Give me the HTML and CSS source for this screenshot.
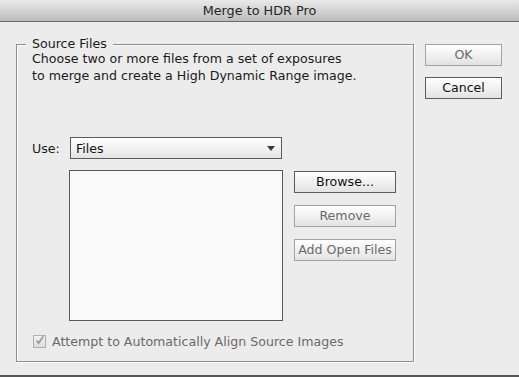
FILE: index.html
```html
<!DOCTYPE html>
<html>
<head>
<meta charset="utf-8">
<link rel="stylesheet" href="styles.css">
</head>
<body>
<div class="window">
  <div class="titlebar">Merge to HDR Pro</div>
  <div class="main">
    <div class="group">
      <div class="legend">Source Files</div>
      <div class="desc">Choose two or more files from a set of exposures<br>to merge and create a High Dynamic Range image.</div>
      <div class="use-row">
        <span class="use-label">Use:</span>
        <div class="select"><span>Files</span><span class="arrow"></span></div>
      </div>
      <div class="list-row">
        <div class="listbox"></div>
        <div class="side-buttons">
          <div class="btn dark">Browse...</div>
          <div class="btn dim">Remove</div>
          <div class="btn dim">Add Open Files</div>
        </div>
      </div>
      <div class="check-row">
        <span class="checkbox"><svg width="13" height="13" viewBox="0 0 13 13"><path d="M3 6.5 L5.5 9.5 L11 1.5" fill="none" stroke="#9a9a9a" stroke-width="2"/></svg></span>
        <span class="check-label">Attempt to Automatically Align Source Images</span>
      </div>
    </div>
    <div class="dialog-buttons">
      <div class="btn dim ok">OK</div>
      <div class="btn dark">Cancel</div>
    </div>
  </div>
</div>
</body>
</html>
```
FILE: styles.css
```css
html, body {
  margin: 0;
  padding: 0;
}
body {
  background: #ececec;
  font-family: "DejaVu Sans", sans-serif;
  font-size: 12.6px;
  color: #1a1a1a;
}
.window {
  width: 519px;
  height: 377px;
  box-sizing: border-box;
  border-bottom: 2px solid #575757;
  display: flex;
  flex-direction: column;
}
.titlebar {
  height: 21px;
  line-height: 22px;
  border-bottom: 1px solid #6a6a6a;
  background: linear-gradient(#e9e9e9, #bdbdbd);
  text-align: center;
  font-size: 12.8px;
  color: #262626;
}
.main {
  display: flex;
  align-items: flex-start;
  padding: 22px 0 0 16px;
  gap: 11px;
}
.group {
  width: 398px;
  height: 318px;
  box-sizing: border-box;
  border: 1px solid #8e8e8e;
  box-shadow: 1px 1px 0 #fbfbfb, inset 1px 1px 0 #fbfbfb;
  padding: 0 0 0 15px;
  display: flex;
  flex-direction: column;
}
.legend {
  align-self: flex-start;
  margin: -8px 0 0 -6px;
  padding: 0 6px;
  background: #ececec;
  line-height: 14px;
}
.desc {
  margin-top: -1px;
  line-height: 17px;
}
.use-row {
  display: flex;
  align-items: center;
  margin-top: 53px;
}
.use-label {
  width: 38px;
}
.select {
  width: 212px;
  height: 22px;
  box-sizing: border-box;
  border: 1px solid #5a5a5a;
  background: linear-gradient(#ffffff, #f3f3f3 50%, #e3e3e3);
  display: flex;
  align-items: center;
  justify-content: space-between;
  padding: 0 6px 0 5px;
  color: #111;
}
.arrow {
  width: 0;
  height: 0;
  border-left: 4px solid transparent;
  border-right: 4px solid transparent;
  border-top: 5px solid #3a3a3a;
  margin-top: 1px;
}
.list-row {
  display: flex;
  margin-top: 11px;
  margin-left: 37px;
  gap: 11px;
}
.listbox {
  width: 214px;
  height: 151px;
  box-sizing: border-box;
  border: 1px solid #595959;
  background: #fafafa;
}
.side-buttons {
  display: flex;
  flex-direction: column;
  gap: 12px;
  padding-top: 1px;
}
.btn {
  box-sizing: border-box;
  height: 22px;
  width: 102px;
  border: 1px solid #5c5c5c;
  background: linear-gradient(#ffffff, #f1f1f1 50%, #e2e2e2);
  text-align: center;
  line-height: 20px;
  color: #111;
}
.btn.dim {
  border-color: #a3a3a3;
  color: #6b6b6b;
}
.check-row {
  display: flex;
  align-items: center;
  margin-top: 13px;
  margin-left: 1px;
  gap: 6px;
  color: #6a6a6a;
}
.checkbox {
  width: 13px;
  height: 13px;
  box-sizing: border-box;
  border: 1px solid #b0b0b0;
  background: linear-gradient(#f4f4f4, #dcdcdc);
  display: flex;
  align-items: center;
  justify-content: center;
}
.checkbox svg {
  display: block;
  margin-top: -2px;
}
.dialog-buttons {
  display: flex;
  flex-direction: column;
  gap: 11px;
}
.dialog-buttons .btn {
  width: 77px;
}
```
